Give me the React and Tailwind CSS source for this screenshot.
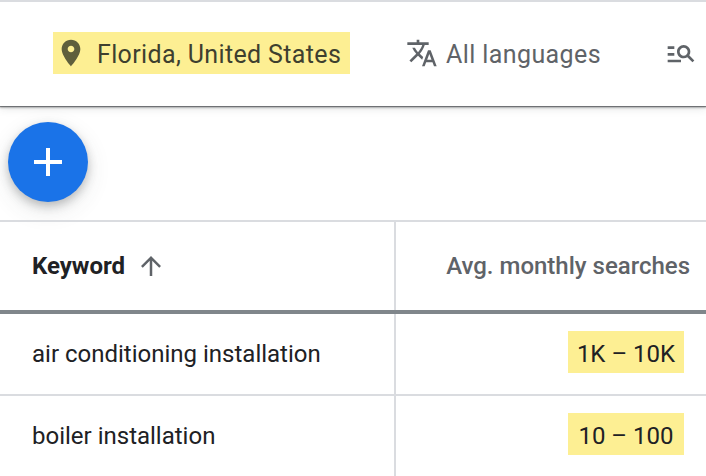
const font = { fontFamily: 'Roboto, sans-serif' }

function Icon({ d, className }) {
  return (
    <svg viewBox="0 0 24 24" className={className} fill="currentColor">
      <path d={d} />
    </svg>
  )
}

const icons = {
  place: 'M12 2C8.13 2 5 5.13 5 9c0 5.25 7 13 7 13s7-7.75 7-13c0-3.87-3.13-7-7-7zm0 9.5c-1.38 0-2.5-1.12-2.5-2.5s1.12-2.5 2.5-2.5 2.5 1.12 2.5 2.5-1.12 2.5-2.5 2.5z',
  translate: 'M12.87 15.07l-2.54-2.51.03-.03c1.74-1.94 2.98-4.17 3.71-6.53H17V4h-7V2H8v2H1v1.99h11.17C11.5 7.92 10.44 9.75 9 11.35 8.07 10.32 7.3 9.19 6.69 8h-2c.73 1.63 1.73 3.17 2.98 4.56l-5.09 5.02L4 19l5-5 3.11 3.11.76-2.04zM18.5 10h-2L12 22h2l1.12-3h4.75L21 22h2l-4.5-12zm-2.62 7l1.62-4.33L19.12 17h-3.24z',
  search: 'M7 9H2V7h5v2zm0 3H2v2h5v-2zm13.59 7-3.83-3.83c-.8.52-1.74.83-2.76.83-2.76 0-5-2.24-5-5s2.24-5 5-5 5 2.24 5 5c0 1.02-.31 1.96-.83 2.75L22 17.59 20.59 19zM17 11c0-1.65-1.35-3-3-3s-3 1.35-3 3 1.35 3 3 3 3-1.35 3-3zM2 19h10v-2H2v2z',
  add: 'M19 13h-6v6h-2v-6H5v-2h6V5h2v6h6v2z',
  up: 'M4 12l1.41 1.41L11 7.83V20h2V7.83l5.58 5.59L20 12l-8-8-8 8z',
}

const rows = [
  { keyword: 'air conditioning installation', searches: '1K – 10K' },
  { keyword: 'boiler installation', searches: '10 – 100' },
]

export default function App() {
  return (
    <div className="h-screen overflow-hidden bg-white" style={font}>
      {/* Top bar */}
      <div className="relative flex h-[106px] items-center border-t-2 border-[#dadce0] bg-white pb-[2px] pl-[53px] shadow-[0_1px_1px_rgba(60,64,67,0.6),0_2px_2px_rgba(60,64,67,0.3),0_3px_8px_rgba(60,64,67,0.12)]">
        <div className="flex h-[42px] w-[297px] items-center bg-[#fdef93] pl-[2px] text-[#3e3f2f]">
          <Icon d={icons.place} className="h-8 w-8 text-[#5f5f3c]" />
          <span className="ml-[10px] pt-[4px] text-[25px] tracking-[0.36px]">Florida, United States</span>
        </div>
        <div className="ml-[56px] flex items-center text-[#5f6368]">
          <Icon d={icons.translate} className="h-8 w-8" />
          <span className="ml-2 pt-[4px] text-[25px] tracking-[0.4px]">All languages</span>
        </div>
        <Icon d={icons.search} className="ml-[64px] h-8 w-8 shrink-0 text-[#5f6368]" />
      </div>

      {/* Add button */}
      <div className="px-2 pt-4 pb-[18px]">
        <button className="flex h-20 w-20 items-center justify-center rounded-full bg-[#1a73e8] text-white shadow-[0_4px_10px_rgba(60,64,67,0.3),0_8px_24px_rgba(60,64,67,0.12)]">
          <Icon d={icons.add} className="h-12 w-12" />
        </button>
      </div>

      {/* Table */}
      <div className="border-t-2 border-[#dadce0]">
        <div className="box-content flex h-[88px] border-b-4 border-[#80868b]">
          <div className="flex w-[394px] items-center pl-8">
            <span className="text-[24px] font-bold text-[#202124]">Keyword</span>
            <Icon d={icons.up} className="ml-[11px] h-[30px] w-[30px] text-[#5f6368]" />
          </div>
          <div className="flex flex-1 items-center justify-end border-l-2 border-[#dadce0] pr-[16px]">
            <span className="text-[24px] font-medium text-[#5f6368]">Avg. monthly searches</span>
          </div>
        </div>
        {rows.map((row) => (
          <div key={row.keyword} className="box-content flex h-20 border-b-2 border-[#dadce0]">
            <div className="flex w-[394px] items-center pl-8 text-[24px] text-[#202124]">
              {row.keyword}
            </div>
            <div className="flex flex-1 items-center justify-end border-l-2 border-[#dadce0] pr-[22px]">
              <span className="mb-[4px] flex h-[42px] w-[116px] items-center justify-center bg-[#fdef93] pt-[4px] text-[24px] text-[#202124]">
                {row.searches}
              </span>
            </div>
          </div>
        ))}
      </div>
    </div>
  )
}
